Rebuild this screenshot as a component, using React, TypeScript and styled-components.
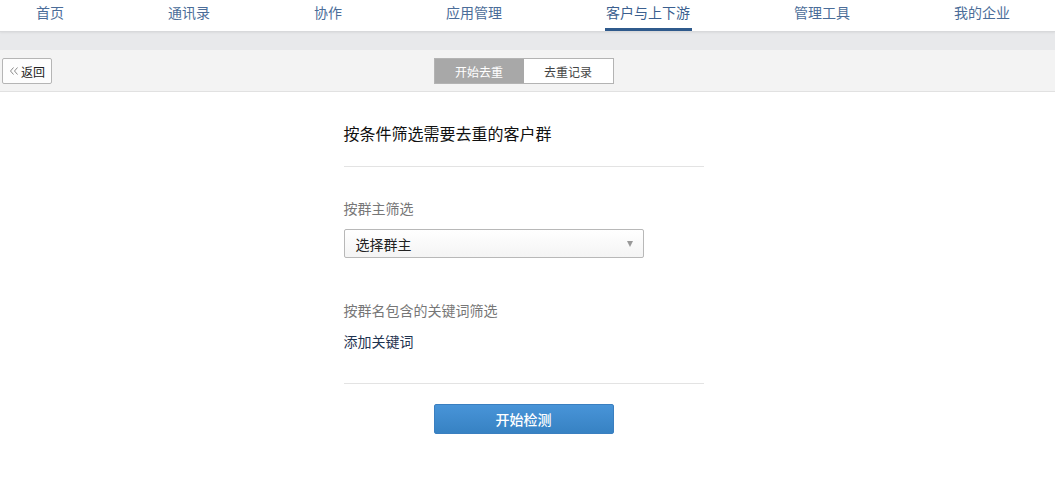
import React from 'react'
import styled, { createGlobalStyle } from 'styled-components'

const Global = createGlobalStyle`
  html, body {
    margin: 0;
    padding: 0;
    background: #fff;
    font-family: "Microsoft YaHei", "Noto Sans CJK SC", "Liberation Sans", sans-serif;
  }
`

const NavBar = styled.nav`
  height: 31px;
  display: flex;
  gap: 104px;
  padding-left: 36px;
  background: #fff;
  border-bottom: 1px solid #d8d9db;
  box-shadow: 0 1px 2px rgba(0, 0, 0, 0.06);
  position: relative;
  z-index: 1;
`

const NavItem = styled.a<{ $active?: boolean }>`
  position: relative;
  display: flex;
  align-items: flex-start;
  padding-top: 3px;
  font-size: 14px;
  line-height: 18px;
  color: ${p => (p.$active ? '#3b5f8f' : '#4b6d99')};
  cursor: pointer;
  &::after {
    content: '';
    display: ${p => (p.$active ? 'block' : 'none')};
    position: absolute;
    left: -1px;
    right: -2px;
    bottom: 0;
    height: 3px;
    background: #2f5a8c;
  }
`

const Band = styled.div`
  height: 18px;
  background: #e8e9eb;
`

const Toolbar = styled.div`
  height: 41px;
  background: #f3f3f3;
  border-bottom: 1px solid #e1e1e1;
  display: flex;
  align-items: center;
  position: relative;
`

const BackButton = styled.button`
  position: absolute;
  left: 2px;
  top: 8px;
  height: 26px;
  width: 50px;
  padding: 0 0 0 6px;
  display: flex;
  align-items: center;
  gap: 2px;
  font-family: inherit;
  font-size: 12px;
  color: #222;
  background: #fdfdfd;
  border: 1px solid #b5b5b5;
  border-radius: 2px;
  cursor: pointer;
`

const Segmented = styled.div`
  margin: 1px auto 0;
  transform: translateX(-4px);
  display: flex;
  border: 1px solid #b3b3b3;
  height: 24px;
`

const Segment = styled.div<{ $active?: boolean }>`
  width: 89px;
  display: flex;
  align-items: center;
  justify-content: center;
  font-size: 12px;
  color: ${p => (p.$active ? '#fff' : '#444')};
  background: ${p => (p.$active ? '#a8a8a8' : '#fff')};
`

const Content = styled.main`
  width: 360px;
  margin: 0 auto;
  transform: translateX(-4px);
  padding-top: 30px;
`

const Title = styled.h2`
  margin: 0;
  font-size: 16px;
  font-weight: normal;
  color: #111;
  line-height: 22px;
  padding-bottom: 22px;
  border-bottom: 1px solid #e3e3e3;
`

const Section = styled.section<{ $gap: number }>`
  padding-top: ${p => p.$gap}px;
`

const Label = styled.div`
  font-size: 14px;
  color: #777;
  line-height: 18px;
`

const Select = styled.div`
  margin-top: 12px;
  width: 300px;
  height: 29px;
  box-sizing: border-box;
  border: 1px solid #b8b8b8;
  border-radius: 2px;
  background: linear-gradient(#ffffff, #f4f4f4);
  display: flex;
  align-items: center;
  justify-content: space-between;
  padding: 0 10px 0 11px;
  font-size: 14px;
  color: #222;
`

const Caret = styled.span`
  width: 0;
  height: 0;
  border-left: 3px solid transparent;
  border-right: 3px solid transparent;
  border-top: 6px solid #999;
`

const AddLink = styled.div`
  margin-top: 13px;
  font-size: 14px;
  color: #1f3350;
  line-height: 18px;
  cursor: pointer;
`

const Divider = styled.hr`
  margin: 33px 0 0;
  border: 0;
  border-top: 1px solid #e3e3e3;
`

const Actions = styled.div`
  display: flex;
  justify-content: center;
  padding-top: 20px;
`

const PrimaryButton = styled.button`
  width: 180px;
  height: 30px;
  border: 1px solid #3a7fc0;
  border-radius: 2px;
  background: linear-gradient(#4894d8, #3782c3);
  color: #fff;
  font-family: inherit;
  font-size: 14px;
  font-weight: 500;
  cursor: pointer;
`

const navs = ['首页', '通讯录', '协作', '应用管理', '客户与上下游', '管理工具', '我的企业']

const Chevrons = () => (
  <svg width="10" height="10" viewBox="0 0 10 10" fill="none" stroke="#8a8a8a" strokeWidth="1">
    <path d="M4.5 1.5 L1.5 5 L4.5 8.5" />
    <path d="M8.5 1.5 L5.5 5 L8.5 8.5" />
  </svg>
)

export default function App() {
  return (
    <>
      <Global />
      <NavBar>
        {navs.map(n => (
          <NavItem key={n} $active={n === '客户与上下游'}>{n}</NavItem>
        ))}
      </NavBar>
      <Band />
      <Toolbar>
        <BackButton><Chevrons />返回</BackButton>
        <Segmented>
          <Segment $active>开始去重</Segment>
          <Segment>去重记录</Segment>
        </Segmented>
      </Toolbar>
      <Content>
        <Title>按条件筛选需要去重的客户群</Title>
        <Section $gap={32}>
          <Label>按群主筛选</Label>
          <Select>
            选择群主
            <Caret />
          </Select>
        </Section>
        <Section $gap={43}>
          <Label>按群名包含的关键词筛选</Label>
          <AddLink>添加关键词</AddLink>
        </Section>
        <Divider />
        <Actions>
          <PrimaryButton>开始检测</PrimaryButton>
        </Actions>
      </Content>
    </>
  )
}
